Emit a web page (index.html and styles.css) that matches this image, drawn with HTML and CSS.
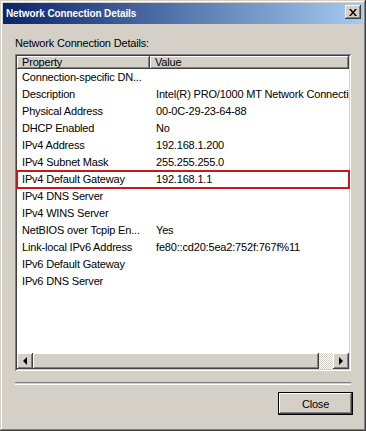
FILE: index.html
```html
<!DOCTYPE html>
<html lang="en">
<head>
  <meta charset="UTF-8">
  <title>Network Connection Details</title>
  <link rel="stylesheet" href="styles.css">
</head>
<body>
  <div class="window">
    <div class="titlebar">
      <span class="title">Network Connection Details</span>
      <span class="close-x">
        <svg width="8" height="7" viewBox="0 0 8 7"><path d="M0 0h2l2 2.5L6 0h2L5 3.5 8 7H6L4 4.5 2 7H0l3-3.5z" fill="#000"/></svg>
      </span>
    </div>

    <div class="content">
      <div class="label">Network Connection Details:</div>

      <div class="listbox">
        <div class="header">
          <div class="hcell prop">Property</div>
          <div class="hcell val">Value</div>
        </div>
        <div class="rows">
          <div class="row"><span class="prop">Connection-specific DN...</span><span class="val"></span></div>
          <div class="row"><span class="prop">Description</span><span class="val">Intel(R) PRO/1000 MT Network Connection</span></div>
          <div class="row"><span class="prop">Physical Address</span><span class="val">00-0C-29-23-64-88</span></div>
          <div class="row"><span class="prop">DHCP Enabled</span><span class="val">No</span></div>
          <div class="row"><span class="prop">IPv4 Address</span><span class="val">192.168.1.200</span></div>
          <div class="row"><span class="prop">IPv4 Subnet Mask</span><span class="val">255.255.255.0</span></div>
          <div class="row marked"><span class="prop">IPv4 Default Gateway</span><span class="val">192.168.1.1</span></div>
          <div class="row"><span class="prop">IPv4 DNS Server</span><span class="val"></span></div>
          <div class="row"><span class="prop">IPv4 WINS Server</span><span class="val"></span></div>
          <div class="row"><span class="prop">NetBIOS over Tcpip En...</span><span class="val">Yes</span></div>
          <div class="row"><span class="prop">Link-local IPv6 Address</span><span class="val">fe80::cd20:5ea2:752f:767f%11</span></div>
          <div class="row"><span class="prop">IPv6 Default Gateway</span><span class="val"></span></div>
          <div class="row"><span class="prop">IPv6 DNS Server</span><span class="val"></span></div>
        </div>
        <div class="hscroll">
          <div class="sbtn"><span class="tri-left"></span></div>
          <div class="thumb"></div>
          <div class="track"></div>
          <div class="sbtn"><span class="tri-right"></span></div>
        </div>
      </div>

      <div class="separator"></div>

      <div class="actions">
        <button class="btn">Close</button>
      </div>
    </div>
  </div>
</body>
</html>
```

FILE: styles.css
```css
body {
  margin: 0;
  padding: 0;
  font-family: "Liberation Sans", Arial, sans-serif;
  font-size: 11px;
  letter-spacing: -0.18px;
  color: #000;
  background: #d4d0c8;
}
.window {
  width: 366px;
  height: 431px;
  box-sizing: border-box;
  background: #d4d0c8;
  padding: 3px;
  box-shadow: inset -1px -1px #404040, inset 1px 1px #d4d0c8, inset -2px -2px #808080, inset 2px 2px #fff;
  display: flex;
  flex-direction: column;
}
.titlebar {
  height: 21px;
  background: linear-gradient(to right, #0a246a, #a6caf0);
  display: flex;
  align-items: center;
  justify-content: space-between;
  padding: 0 2px 0 3px;
  box-sizing: border-box;
}
.title {
  color: #fff;
  font-weight: bold;
  font-size: 10px;
  letter-spacing: -0.1px;
}
.close-x {
  width: 16px;
  height: 14px;
  box-sizing: border-box;
  background: #d4d0c8;
  box-shadow: inset -1px -1px #404040, inset 1px 1px #fff, inset -2px -2px #808080;
  display: flex;
  align-items: center;
  justify-content: center;
  margin-top: -3px;
}
.close-x svg {
  display: block;
}
.content {
  flex: 1;
  display: flex;
  flex-direction: column;
  padding: 12px 9px 0 12px;
}
.label {
  height: 18px;
  line-height: 14px;
}
.listbox {
  width: 336px;
  height: 317px;
  box-sizing: border-box;
  background: #fff;
  padding: 2px;
  box-shadow: inset 1px 1px #808080, inset -1px -1px #fff, inset 2px 2px #404040, inset -2px -2px #d4d0c8;
  display: flex;
  flex-direction: column;
  overflow: hidden;
}
.header {
  display: flex;
  height: 13px;
  flex: none;
}
.hcell {
  box-sizing: border-box;
  background: #d4d0c8;
  box-shadow: inset -1px -1px #404040, inset 1px 1px #fff, inset -2px -2px #808080;
  line-height: 12px;
  padding-left: 5px;
}
.hcell.prop {
  width: 133px;
}
.hcell.val {
  flex: 1;
}
.rows {
  flex: 1;
}
.row {
  display: flex;
  height: 17px;
  line-height: 17px;
  white-space: nowrap;
  overflow: hidden;
}
.row .prop {
  width: 133px;
  padding-left: 5px;
  box-sizing: border-box;
  overflow: hidden;
  flex: none;
}
.row .val {
  padding-left: 6px;
}
.row.marked {
  outline: 2px solid #c8171e;
  outline-offset: -1px;
  position: relative;
}
.hscroll {
  height: 16px;
  display: flex;
  flex: none;
}
.sbtn {
  width: 16px;
  height: 16px;
  box-sizing: border-box;
  background: #d4d0c8;
  box-shadow: inset -1px -1px #404040, inset 1px 1px #fff, inset -2px -2px #808080;
  display: flex;
  align-items: center;
  justify-content: center;
}
.tri-left {
  width: 0;
  height: 0;
  border-top: 4px solid transparent;
  border-bottom: 4px solid transparent;
  border-right: 4px solid #000;
}
.tri-right {
  width: 0;
  height: 0;
  border-top: 4px solid transparent;
  border-bottom: 4px solid transparent;
  border-left: 4px solid #000;
}
.thumb {
  width: 286px;
  box-sizing: border-box;
  background: #d4d0c8;
  box-shadow: inset -1px -1px #404040, inset 1px 1px #fff, inset -2px -2px #808080;
}
.track {
  flex: 1;
  background: repeating-conic-gradient(#fff 0 25%, #d4d0c8 0 50%) 0 0 / 2px 2px;
}
.separator {
  width: 336px;
  height: 1px;
  margin-top: 11px;
  border-top: 1px solid #808080;
  border-bottom: 1px solid #fff;
}
.actions {
  display: flex;
  justify-content: flex-end;
  padding-top: 7px;
  padding-right: 1px;
}
.btn {
  width: 75px;
  height: 23px;
  font-family: "Liberation Sans", Arial, sans-serif;
  font-size: 11px;
  letter-spacing: -0.18px;
  background: #d4d0c8;
  border: 1px solid #000;
  padding: 0;
  box-shadow: inset -1px -1px #404040, inset 1px 1px #fff, inset -2px -2px #808080;
  color: #000;
}
```
